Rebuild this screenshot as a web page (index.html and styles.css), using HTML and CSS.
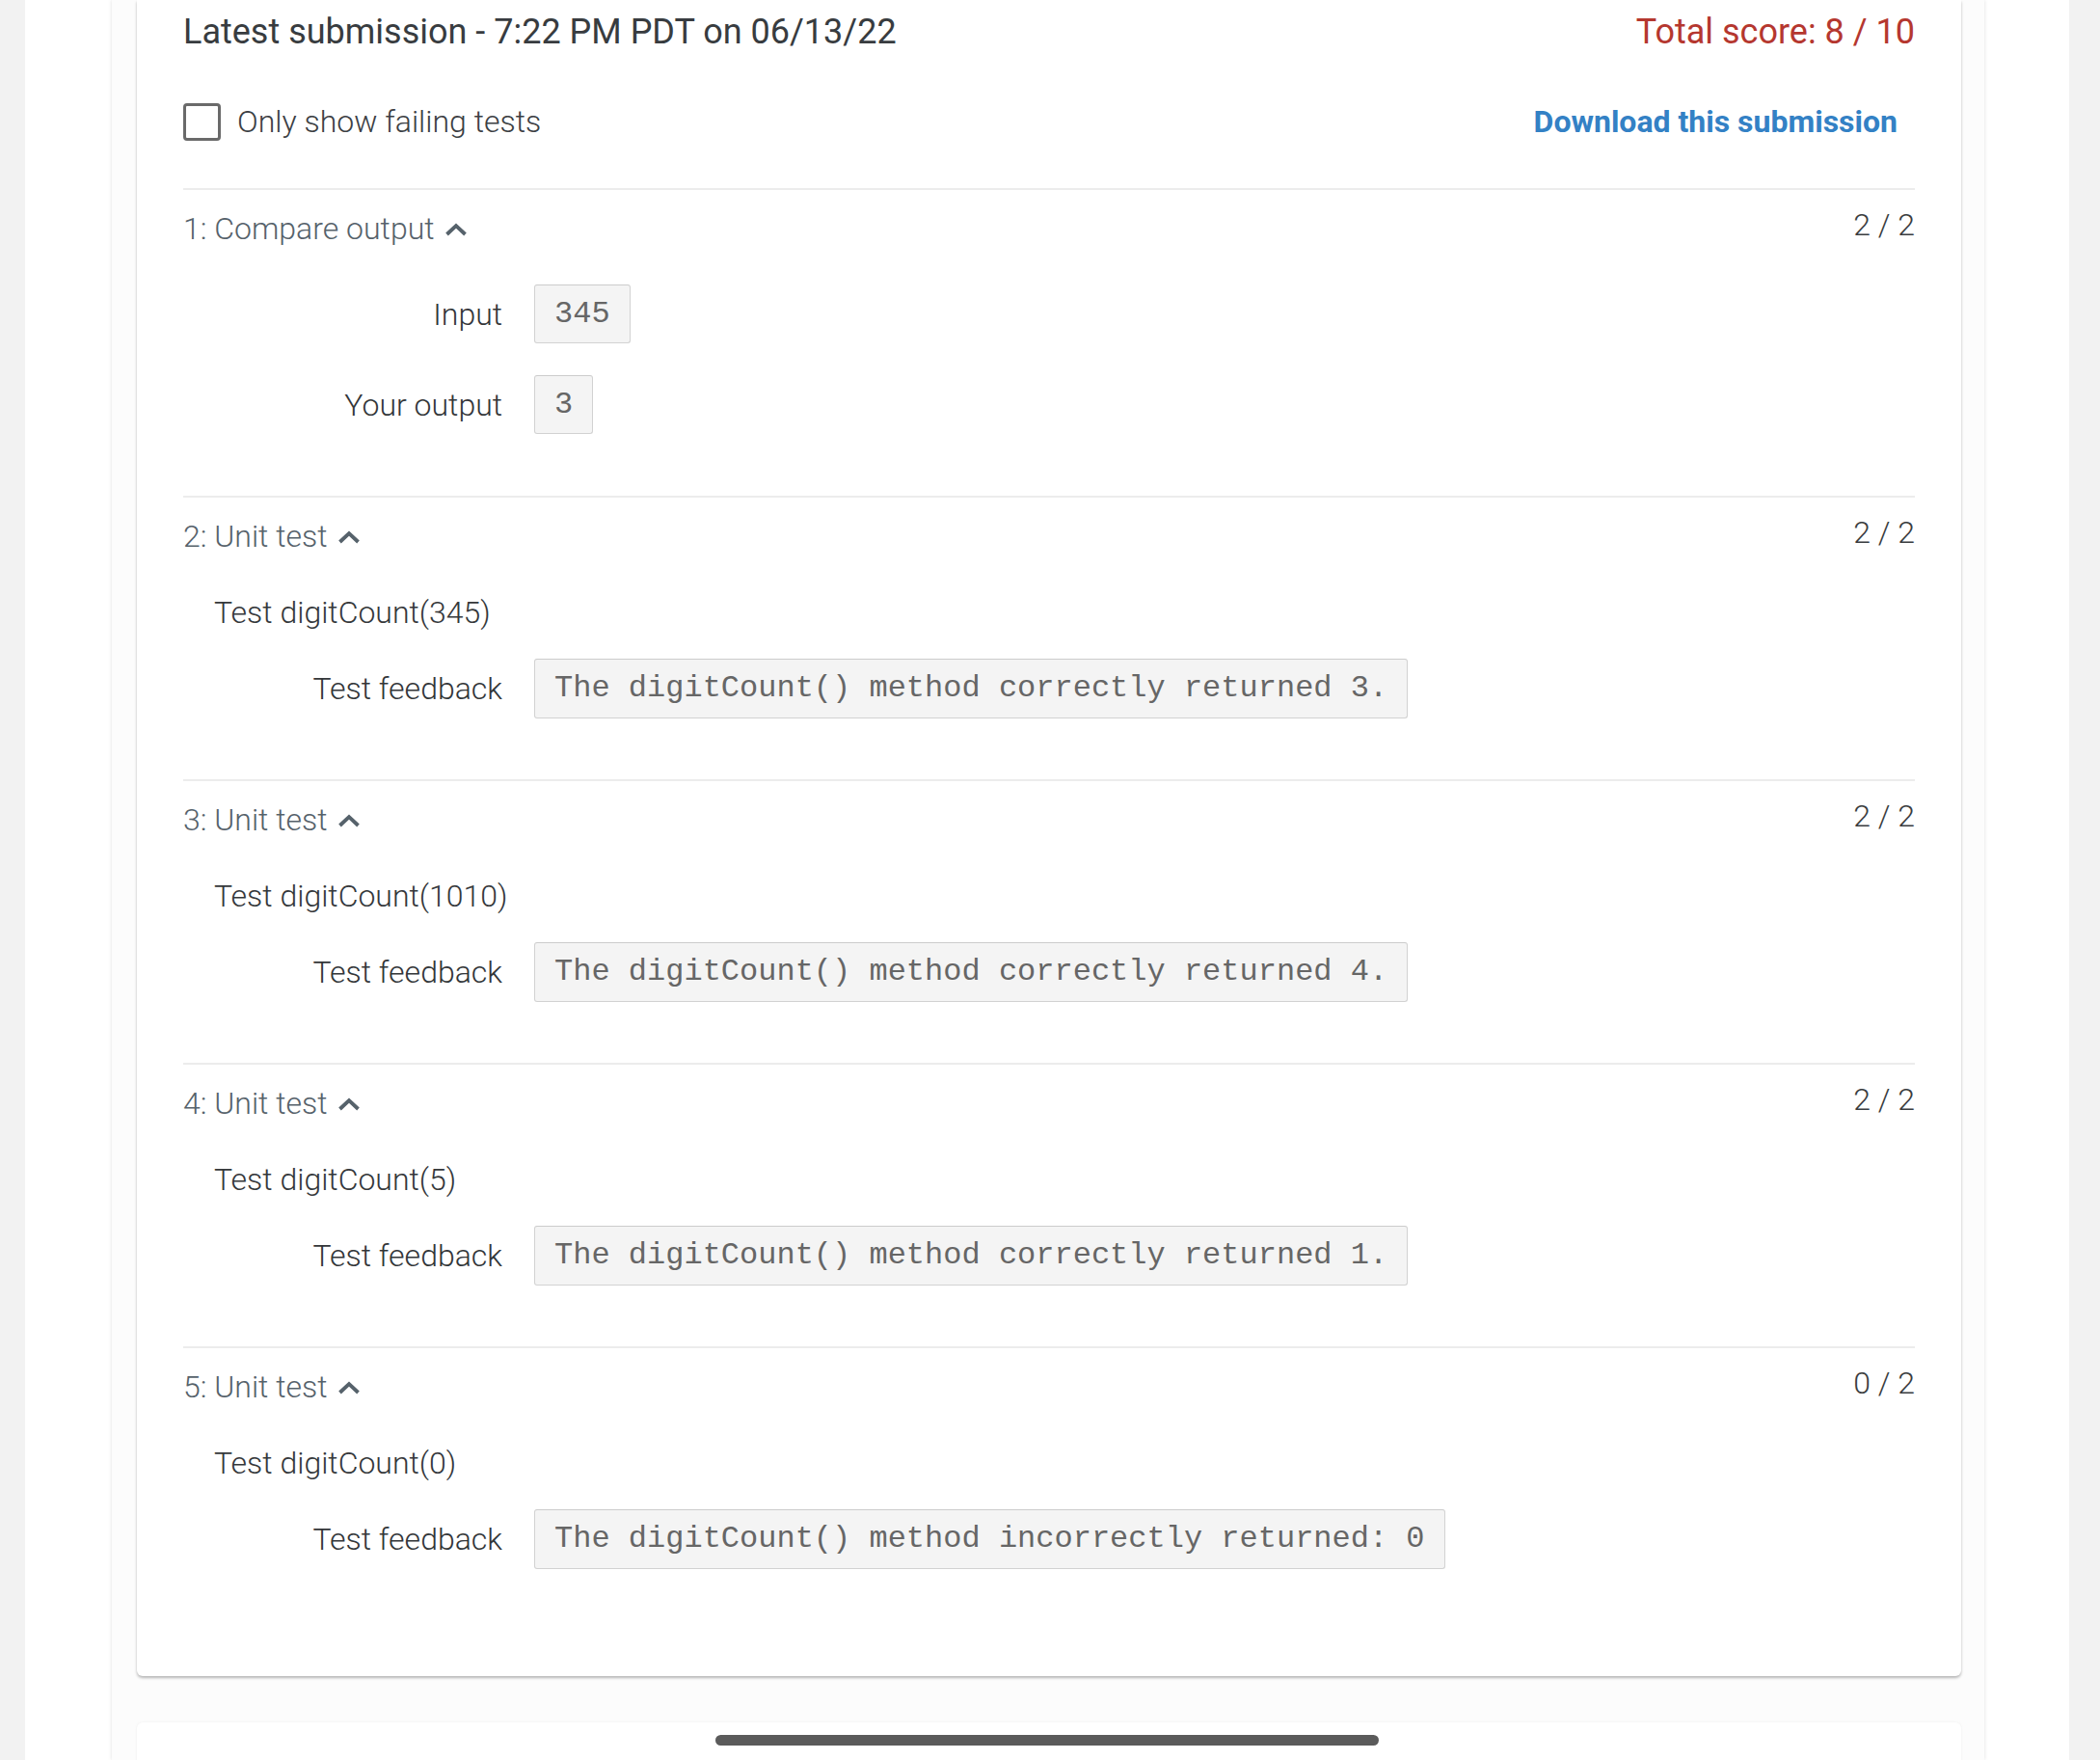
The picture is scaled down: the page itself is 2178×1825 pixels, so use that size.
FILE: index.html
```html
<!DOCTYPE html>
<html lang="en">
<head>
<meta charset="utf-8">
<title>Submission results</title>
<link rel="stylesheet" href="styles.css">
</head>
<body>
<div class="frame">
  <div class="column">
    <div class="card">
      <div class="summary">
        <div class="latest">Latest submission - 7:22 PM PDT on 06/13/22</div>
        <div class="total">Total score: 8 / 10</div>
      </div>
      <div class="options">
        <label class="check"><span class="box"></span><span>Only show failing tests</span></label>
        <a class="download" href="#">Download this submission</a>
      </div>

      <div class="section">
        <div class="sec-head">
          <div class="sec-title">1: Compare output <svg class="chev" width="24" height="14" viewBox="0 0 24 14"><polyline points="2.5,12 12,3 21.5,12" fill="none" stroke="#56626b" stroke-width="3.8"/></svg></div>
          <div class="sec-score">2 / 2</div>
        </div>
        <div class="io">
          <div class="io-row"><div class="io-label">Input</div><div class="code short">345</div></div>
          <div class="io-row"><div class="io-label">Your output</div><div class="code short">3</div></div>
        </div>
      </div>

      <div class="section">
        <div class="sec-head">
          <div class="sec-title">2: Unit test <svg class="chev" width="24" height="14" viewBox="0 0 24 14"><polyline points="2.5,12 12,3 21.5,12" fill="none" stroke="#56626b" stroke-width="3.8"/></svg></div>
          <div class="sec-score">2 / 2</div>
        </div>
        <div class="test-name">Test digitCount(345)</div>
        <div class="io-row feedback"><div class="io-label">Test feedback</div><div class="code">The digitCount() method correctly returned 3.</div></div>
      </div>

      <div class="section">
        <div class="sec-head">
          <div class="sec-title">3: Unit test <svg class="chev" width="24" height="14" viewBox="0 0 24 14"><polyline points="2.5,12 12,3 21.5,12" fill="none" stroke="#56626b" stroke-width="3.8"/></svg></div>
          <div class="sec-score">2 / 2</div>
        </div>
        <div class="test-name">Test digitCount(1010)</div>
        <div class="io-row feedback"><div class="io-label">Test feedback</div><div class="code">The digitCount() method correctly returned 4.</div></div>
      </div>

      <div class="section">
        <div class="sec-head">
          <div class="sec-title">4: Unit test <svg class="chev" width="24" height="14" viewBox="0 0 24 14"><polyline points="2.5,12 12,3 21.5,12" fill="none" stroke="#56626b" stroke-width="3.8"/></svg></div>
          <div class="sec-score">2 / 2</div>
        </div>
        <div class="test-name">Test digitCount(5)</div>
        <div class="io-row feedback"><div class="io-label">Test feedback</div><div class="code">The digitCount() method correctly returned 1.</div></div>
      </div>

      <div class="section">
        <div class="sec-head">
          <div class="sec-title">5: Unit test <svg class="chev" width="24" height="14" viewBox="0 0 24 14"><polyline points="2.5,12 12,3 21.5,12" fill="none" stroke="#56626b" stroke-width="3.8"/></svg></div>
          <div class="sec-score">0 / 2</div>
        </div>
        <div class="test-name">Test digitCount(0)</div>
        <div class="io-row feedback"><div class="io-label">Test feedback</div><div class="code">The digitCount() method incorrectly returned: 0</div></div>
      </div>
    </div>
    <div class="card next"></div>
  </div>
</div>
<div class="home-bar"></div>
</body>
</html>
```

FILE: styles.css
```css
html, body {
  margin: 0;
  padding: 0;
}
body {
  background: #f2f2f2;
  font-family: Roboto, "Liberation Sans", Arial, sans-serif;
  height: 1825px;
  overflow: hidden;
}
.frame {
  margin-left: 26px;
  width: 2120px;
  height: 1825px;
  background: #ffffff;
  display: flex;
}
.column {
  margin-left: 90px;
  width: 1942px;
  box-sizing: border-box;
  padding: 0 24px 0 26px;
  background: #fcfcfc;
  box-shadow: 0 0 4px rgba(0, 0, 0, 0.13);
}
.card {
  background: #ffffff;
  border-radius: 0 0 6px 6px;
  box-shadow: 0 2px 3px rgba(0, 0, 0, 0.28);
  padding: 9px 48px 48px 48px;
}
.card.next {
  margin-top: 48px;
  height: 100px;
  border-radius: 6px 6px 0 0;
  padding: 0;
  box-shadow: 0 0 3px rgba(0, 0, 0, 0.06);
}
.summary {
  display: flex;
  justify-content: space-between;
  font-size: 36px;
  line-height: 48px;
}
.latest {
  color: #383c40;
}
.total {
  color: #b5372f;
}
.options {
  height: 138px;
  display: flex;
  align-items: center;
  justify-content: space-between;
}
.check {
  display: flex;
  align-items: center;
  gap: 17px;
  font-size: 32px;
  font-weight: 300;
  color: #3c4044;
}
.box {
  width: 33px;
  height: 33px;
  border: 3px solid #6a6a6a;
  border-radius: 4px;
}
.download {
  color: #3381c5;
  font-weight: 700;
  font-size: 32px;
  text-decoration: none;
  padding-right: 18px;
}
.section {
  border-top: 2px solid #ececec;
  padding: 16px 0 64px 0;
}
.section + .section .test-name {
  margin-top: 31px;
}
.section + .section {
  padding-bottom: 63px;
}
.sec-head {
  display: flex;
  justify-content: space-between;
  align-items: flex-start;
}
.sec-title {
  font-size: 32px;
  font-weight: 300;
  line-height: 48px;
  color: #56626b;
  display: flex;
  align-items: center;
  gap: 10px;
}
.chev {
  margin-top: 2px;
}
.sec-score {
  font-size: 32px;
  font-weight: 300;
  line-height: 40px;
  color: #3a3d40;
}
.io {
  margin-top: 34px;
  display: flex;
  flex-direction: column;
  gap: 33px;
}
.io-row {
  display: flex;
  align-items: center;
  gap: 33px;
}
.io-label {
  width: 331px;
  text-align: right;
  font-size: 32px;
  font-weight: 300;
  color: #333639;
}
.code {
  background: #f4f4f4;
  border: 1px solid #d2d2d2;
  border-top-color: #cccccc;
  border-radius: 3px;
  padding: 12px 20px;
  font-family: "Liberation Mono", "Courier New", monospace;
  font-size: 32px;
  line-height: 36px;
  color: #666666;
  white-space: pre;
}
.code.short {
  line-height: 35px;
}
.test-name {
  margin-top: 30px;
  padding-left: 32px;
  font-size: 32px;
  font-weight: 300;
  line-height: 48px;
  color: #35383b;
}
.feedback {
  margin-top: 24px;
}
.home-bar {
  position: fixed;
  left: 742px;
  top: 1799px;
  width: 688px;
  height: 11px;
  border-radius: 6px;
  background: #5b5b5b;
}
```
